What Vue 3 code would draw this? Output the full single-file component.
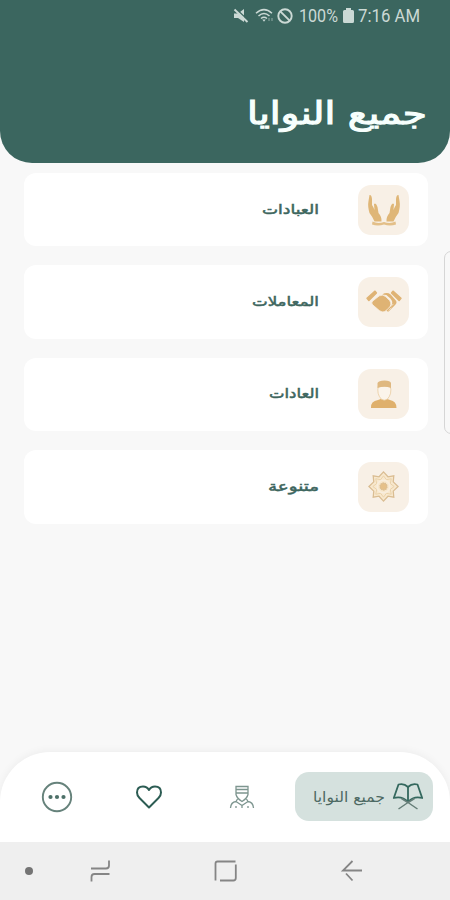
<script setup>
const items = [
  { label: 'العبادات', width: 57, icon: 'hands' },
  { label: 'المعاملات', width: 67, icon: 'shake' },
  { label: 'العادات', width: 50, icon: 'person' },
  { label: 'متنوعة', width: 51, icon: 'star' },
]
</script>

<template>
  <div class="screen">
    <header class="header">
      <div class="status">
        <svg class="s-mute" width="17" height="16" viewBox="0 0 17 16">
          <path d="M1 5.5h4L11 1v13L5 10H1z" fill="currentColor" />
          <path d="M2 0l14 13" stroke="#3b665f" stroke-width="1.500" />
          <path d="M1.500 1.500l13 12.500" stroke="currentColor" stroke-width="1.900" />
        </svg>
        <svg class="s-wifi" width="21" height="16" viewBox="0 0 21 16" fill="none" stroke="currentColor" stroke-width="1.5">
          <path d="M1 5.200Q9 -2 17 5.200M3.500 8Q9 3 14.500 8M6 10.500Q9 8 12 10.500" />
          <path d="M7.300 11.500h3.400L9 13.800z" fill="currentColor" stroke="none" />
          <path d="M14 10v3m3-3v3" stroke-width="1" opacity=".6" />
        </svg>
        <svg class="s-block" width="16" height="16" viewBox="0 0 16 16" fill="none" stroke="currentColor" stroke-width="1.900">
          <circle cx="8" cy="8" r="6.700" /><path d="M3.300 3.300l9.400 9.400" />
        </svg>
        <svg class="s-pct" width="40" height="18"><text x="0" y="15" textLength="39" lengthAdjust="spacingAndGlyphs">100%</text></svg>
        <svg class="s-bat" width="11" height="16" viewBox="0 0 11 16"><path d="M3 0h5v2h1.500q1.500 0 1.500 1.500v10q0 1.500-1.500 1.500h-8Q0 15 0 13.500v-10Q0 2 1.500 2H3z" fill="currentColor" /></svg>
        <svg width="63" height="18"><text x="0" y="15" textLength="62" lengthAdjust="spacingAndGlyphs">7:16 AM</text></svg>
      </div>
      <h1 class="title">
        <svg width="181" height="50"><text x="180" y="32.500" textLength="180" lengthAdjust="spacingAndGlyphs">جميع النوايا</text></svg>
      </h1>
    </header>

    <main class="list">
      <div v-for="item in items" :key="item.label" class="card">
        <svg class="label" width="90" height="30">
          <text x="90" y="19" :textLength="item.width" lengthAdjust="spacingAndGlyphs">{{ item.label }}</text>
        </svg>
        <div class="tile">
          <svg v-if="item.icon === 'hands'" width="36" height="36" viewBox="0 0 36 36" fill="#dfb677">
            <path d="M3.500 3Q5.500 2.500 6 7v6q1.500 2 2.500 5l-.5-6q2-2 3.500 3l1 6q3.500 4 3 8.500H8.500Q6 24 3.500 21Q1.500 14 2.500 9z" />
            <path d="M32.500 3Q30.500 2.500 30 7v6q-1.500 2-2.500 5l.5-6q-2-2-3.500 3l-1 6q-3.500 4-3 8.500H27.500Q30 24 32.500 21Q34.500 14 33.500 9z" />
            <path d="M6.500 29.500q5 2.500 11.500.5 6.500 2 11.500-.5l.5 3q-6 2-12 0-6 2-12 0z" opacity=".85" />
          </svg>
          <svg v-else-if="item.icon === 'shake'" width="36" height="34" viewBox="0 0 38 36" fill="#dfb374">
            <path d="M9.500 6.500l1.500 2-8 8-2-2.500zM28.500 6.500l-1.500 2 8 8 2-2.500z" stroke="#dfb374" stroke-width="1.500" stroke-linejoin="round" />
            <path d="M17 10q5-3 9 0l6 7q1 2-1 4l-7 7q-2 .5-2.500-1.500l5-4.500q3-4-1-8l-4-3.500z" />
            <path d="M7 17l7-5.500q4-2 7 1l4 4q3 4-1 8l-4 3.500q-3 1.500-6-1l-7-6q-2-2 0-4z" stroke="#f8f0e6" stroke-width=".8" />
            <path d="M24 27l3-3m-1-1l3-3" stroke="#f7efe5" stroke-width=".8" />
          </svg>
          <svg v-else-if="item.icon === 'person'" width="36" height="36" viewBox="0 0 36 36">
            <path d="M5 32q-.5-7 7-8l4-1.500h4l4 1.500q6.500 1 6.500 8z" fill="#dfb06c" />
            <path d="M12.300 10h12q2 8-3 13.200-3 2-6 0Q10.500 18 12.300 10z" fill="#fbf4eb" stroke="#e7c694" stroke-width=".7" />
            <path d="M11.500 12V7q1-2.500 7-2.500T25 7v5q-6.500-2.500-13.500 0z" fill="#dfb880" />
          </svg>
          <svg v-else width="35" height="35" viewBox="0 0 36 36" fill="none" stroke="#dabd92" stroke-width="1.300">
            <path d="M18 3l4.600 5 6-1-.600 6.200 5 4.800-5 4.800.600 6.200-6-1-4.600 5-4.600-5-6 1 .600-6.200L3 18l5-4.800L7.400 7l6 1z" fill="#f8e8ce" />
            <path d="M18 7l3 4 5-1-1 5 4 3-4 3 1 5-5-1-3 4-3-4-5 1 1-5-4-3 4-3-1-5 5 1z" stroke="#e8cfa4" stroke-width=".9" />
            <circle cx="18" cy="18" r="6.500" stroke="#f8eedf" stroke-width="1.200" />
            <circle cx="18" cy="18" r="3.600" fill="#e5c089" stroke-dasharray="1.500 .7" />
          </svg>
        </div>
      </div>
    </main>

    <nav class="tabs">
      <svg class="t-more" width="32" height="32" viewBox="0 0 32 32" fill="none" stroke="#66827b" stroke-width="1.900">
        <circle cx="16" cy="16" r="14.200" />
        <g fill="#4d7068" stroke="none"><circle cx="9.500" cy="16" r="2.100" /><circle cx="16" cy="16" r="2.100" /><circle cx="22.500" cy="16" r="2.100" /></g>
      </svg>
      <svg class="t-heart" width="28" height="26" viewBox="0 0 28 26" fill="none" stroke="#2c5c53" stroke-width="2" stroke-linejoin="round">
        <path d="M14 23.500L4.500 14Q2 11.500 2 8.500 2 2.500 8 2.500q4 0 6 3.500 2-3.500 6-3.500 6 0 6 6 0 3-2.500 5.500z" />
      </svg>
      <svg class="t-imam" width="26" height="26" viewBox="0 0 26 26" fill="none" stroke="#7d958f" stroke-width="1.300">
        <path d="M7 2.500h12v8q-1 4-6 7-5-3-6-7zM7 5.500h12M7 9h12M8.500 15L7 17.500Q2 18 1.500 24M17.500 15l1.500 2.500q5 .5 5.500 6.500M7 17.500l6 4 6-4M13 21v3M7 22v2m12-2v2" />
      </svg>
      <div class="active">
        <svg width="74" height="32"><text x="73" y="20.500" textLength="72" lengthAdjust="spacingAndGlyphs">جميع النوايا</text></svg>
        <svg width="32" height="29" viewBox="0 0 32 29" fill="none" stroke="#34685e" stroke-width="1.800" stroke-linejoin="round">
          <path d="M16 5Q12 1 6.500 2.500L1.800 16Q10 13.500 16 20 22 13.500 30.200 16L25.500 2.500Q20 1 16 5z" />
          <path d="M16 5v14" />
          <path d="M6.500 27L16 20.500l6.500-4M25.500 27L16 20.500l-6.500-4" stroke="#657d77" stroke-width="1.500" />
        </svg>
      </div>
    </nav>

    <footer class="system">
      <svg class="y-dot" width="10" height="10"><circle cx="5" cy="5" r="4" fill="#747474" /></svg>
      <svg class="y-recent" width="22" height="24" viewBox="0 0 22 24">
        <path d="M1 9.500h15q3 0 3-3V1.500M1.500 22.500V18q0-3 3-3h15" />
      </svg>
      <svg class="y-home" width="24" height="24" viewBox="0 0 24 24">
        <path d="M1.500 21.500V4.500q0-2 2-2H21.500M21.800 5.500v13.500q0 2.500-2.500 2.500H6" />
      </svg>
      <svg class="y-back" width="22" height="24" viewBox="0 0 22 24">
        <path d="M10.500 2L1 11.500h19M4 14.500l6.500 7" />
      </svg>
    </footer>

    <div class="edge"></div>
  </div>
</template>

<style>
body { margin: 0; }
</style>

<style scoped>
.screen {
  position: relative;
  width: 450px;
  height: 900px;
  display: flex;
  flex-direction: column;
  background: #f8f8f8;
  overflow: hidden;
  font-family: "DejaVu Sans", sans-serif;
}
svg { display: block; flex: none; overflow: visible; }
.header {
  height: 163px;
  flex: none;
  background: #3b665f;
  border-radius: 0 0 32px 32px;
}
.status {
  display: flex;
  align-items: center;
  height: 32px;
  padding-left: 233px;
  color: #cbd9d5;
  font-family: Roboto, sans-serif;
  font-size: 17.500px;
}
.status text { fill: currentColor; }
.s-wifi { margin-left: 5px; }
.s-block { margin-left: 1px; }
.s-pct { margin-left: 6px; }
.s-bat { margin: 0 4px; }
.title {
  display: flex;
  justify-content: flex-end;
  margin: 59px 22px 0 0;
  font-size: 31px;
  font-weight: 400;
  direction: ltr;
}
.title text { fill: #f7fffd; stroke: #f7fffd; stroke-width: 1.100px; direction: rtl; }
.list {
  flex: 1;
  display: flex;
  flex-direction: column;
  gap: 19px;
  padding: 10px 22px 0 24px;
}
.card {
  box-sizing: border-box;
  height: 73.400px;
  display: flex;
  align-items: center;
  justify-content: flex-end;
  gap: 39px;
  padding-right: 19px;
  background: #fff;
  border-radius: 12px;
}
.label { font-size: 13.500px; font-weight: 400; }
.label text { fill: #3d665e; stroke: #3d665e; stroke-width: .5px; direction: rtl; }
.tile {
  width: 51px;
  height: 50px;
  display: flex;
  align-items: center;
  justify-content: center;
  background: #f8f0e6;
  border-radius: 13px;
}
.tabs {
  box-sizing: border-box;
  height: 90px;
  flex: none;
  display: flex;
  align-items: center;
  padding: 0 17px 1px 41px;
  background: #fff;
  border-radius: 50px 50px 0 0;
  box-shadow: 0 -1px 8px rgba(0, 0, 0, .05);
}
.t-heart { margin-left: 62px; }
.t-imam { margin-left: 66px; }
.active {
  box-sizing: border-box;
  width: 138px;
  height: 49px;
  display: flex;
  align-items: center;
  gap: 6px;
  margin-left: auto;
  padding-left: 17px;
  background: #d5e1de;
  border-radius: 14px;
}
.active text { font-size: 14.500px; fill: #4d6963; direction: rtl; }
.system {
  height: 58px;
  flex: none;
  display: flex;
  align-items: center;
  padding-left: 24px;
  background: #efefef;
}
.system path { fill: none; stroke: #858585; stroke-width: 1.800; }
.y-recent { margin-left: 56px; }
.y-home { margin-left: 102px; }
.y-back { margin-left: 104px; }
.edge {
  position: absolute;
  top: 251px;
  right: -8px;
  width: 12px;
  height: 181px;
  border: 1px solid #d6d6d6;
  border-radius: 7px;
}
</style>
